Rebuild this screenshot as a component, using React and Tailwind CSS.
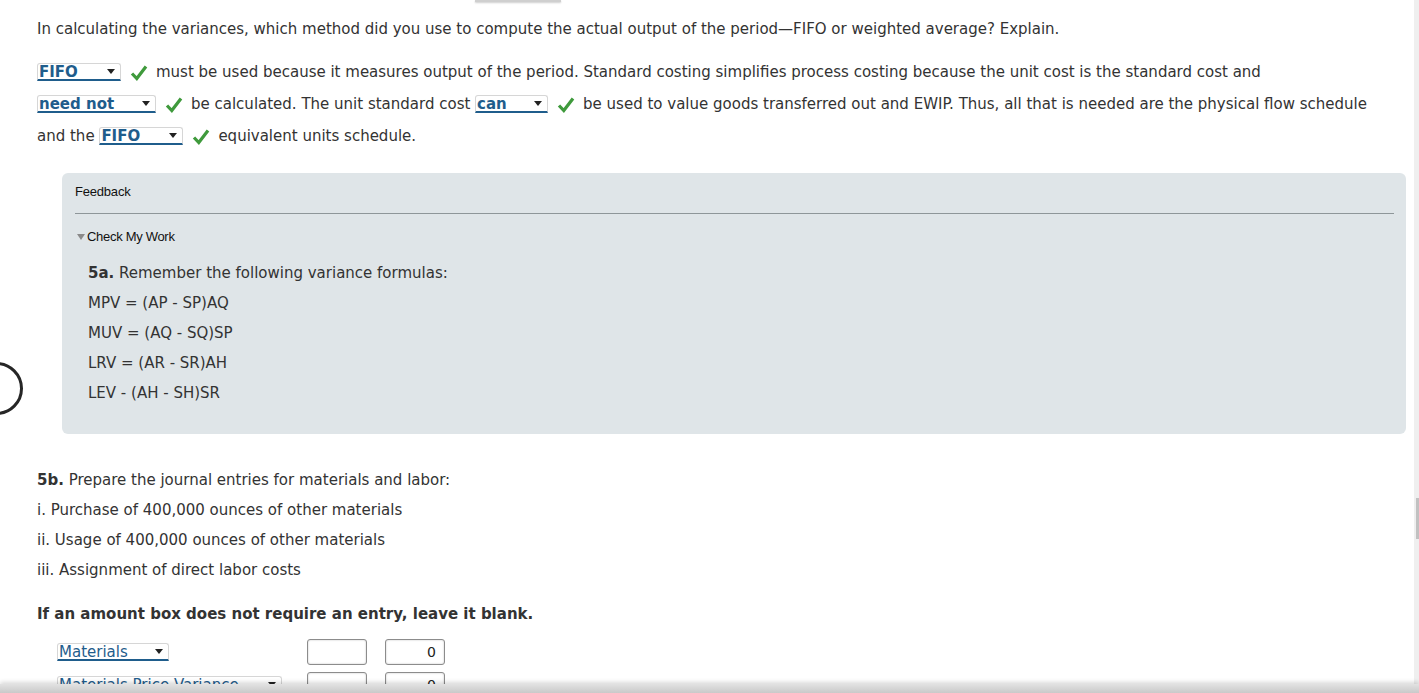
const FONT = "font-['DejaVu_Sans','Verdana',sans-serif]"

function Check() {
  return (
    <svg width="18" height="17" viewBox="0 0 18 17" className="shrink-0">
      <path d="M2 9.5 L6.8 14.5 L16 2.5" fill="none" stroke="#3f9a3c" strokeWidth="3.2" strokeLinecap="butt" strokeLinejoin="miter" />
    </svg>
  )
}

function Caret() {
  return (
    <svg width="8" height="5" viewBox="0 0 8 5" className="shrink-0">
      <path d="M0 0 H8 L4 5 Z" fill="#222" />
    </svg>
  )
}

function Pick({ value, w, bold = true }) {
  return (
    <span
      className={`inline-flex items-center justify-between h-[18px] bg-white rounded-t-[3px] border border-b-2 border-[#d6d6d6] border-b-[#1f5d8c] pl-[1px] pr-[5px] text-[#1f5d8c] leading-[16px] ${bold ? 'font-bold' : ''}`}
      style={{ width: w }}
    >
      <span className="whitespace-nowrap">{value}</span>
      <Caret />
    </span>
  )
}

function Amount({ value }) {
  return (
    <div className="w-[60px] h-[26px] rounded-[3px] border border-[#8c8c8c] bg-white shadow-[inset_0_0_2px_rgba(0,0,0,0.25)] flex items-center justify-end pr-[8px] text-[14px] text-[#222]">
      {value}
    </div>
  )
}

function EntryRow({ account, w, value }) {
  return (
    <div className="flex items-center h-[26px]">
      <div className="w-[250px] pl-[20px] flex items-center">
        <Pick value={account} w={w} bold={false} />
      </div>
      <div className="ml-[20px]"><Amount /></div>
      <div className="ml-[18px]"><Amount value={value} /></div>
    </div>
  )
}

export default function App() {
  return (
    <div className={`relative w-full h-[693px] overflow-hidden bg-white flex ${FONT} text-[15px] text-[#333]`}>
      <div className="flex-1 pl-[37px] pr-[8px] pt-[17px]">
        <p className="leading-[24px] whitespace-nowrap">
          In calculating the variances, which method did you use to compute the actual output of the period—FIFO or weighted average? Explain.
        </p>

        <div className="mt-[15px] leading-[32px]">
          <div className="flex items-center h-[32px] whitespace-nowrap">
            <Pick value="FIFO" w={84} />
            <span className="ml-[9px]"><Check /></span>
            <span className="ml-[8px]">must be used because it measures output of the period. Standard costing simplifies process costing because the unit cost is the standard cost and</span>
          </div>
          <div className="flex items-center h-[32px] whitespace-nowrap">
            <Pick value="need not" w={119} />
            <span className="ml-[9px]"><Check /></span>
            <span className="ml-[8px]">be calculated. The unit standard cost&nbsp;</span>
            <Pick value="can" w={73} />
            <span className="ml-[9px]"><Check /></span>
            <span className="ml-[8px]">be used to value goods transferred out and EWIP. Thus, all that is needed are the physical flow schedule</span>
          </div>
          <div className="flex items-center h-[32px] whitespace-nowrap">
            <span>and the&nbsp;</span>
            <Pick value="FIFO" w={84} />
            <span className="ml-[9px]"><Check /></span>
            <span className="ml-[8px]">equivalent units schedule.</span>
          </div>
        </div>

        <div className="mt-[21px] ml-[25px] bg-[#dfe5e8] rounded-[6px] pt-[9px] pb-[26px] pl-[13px] pr-[12px]">
          <div className="font-['Liberation_Sans',Arial,sans-serif] text-[13px] tracking-[-0.2px] leading-[20px] text-[#111]">Feedback</div>
          <div className="mt-[11px] h-px bg-[#8e9699]" />
          <div className="mt-[13px] flex items-center font-['Liberation_Sans',Arial,sans-serif] text-[13px] tracking-[-0.3px] leading-[20px] text-[#111]">
            <svg width="10" height="8" viewBox="0 0 10 8" className="ml-[1px] mr-[1px]">
              <path d="M1 1 H9 L5 7 Z" fill="#8a8a8a" />
            </svg>
            Check My Work
          </div>
          <div className="mt-[11px] pl-[13px] leading-[30px]">
            <p><span className="font-bold">5a.</span> Remember the following variance formulas:</p>
            <p>MPV = (AP - SP)AQ</p>
            <p>MUV = (AQ - SQ)SP</p>
            <p>LRV = (AR - SR)AH</p>
            <p>LEV - (AH - SH)SR</p>
          </div>
        </div>

        <div className="mt-[31px] leading-[30px]">
          <p><span className="font-bold">5b.</span> Prepare the journal entries for materials and labor:</p>
          <p>i. Purchase of 400,000 ounces of other materials</p>
          <p>ii. Usage of 400,000 ounces of other materials</p>
          <p>iii. Assignment of direct labor costs</p>
        </div>

        <p className="mt-[14px] leading-[30px] font-bold">If an amount box does not require an entry, leave it blank.</p>

        <div className="mt-[10px] flex flex-col gap-[7px]">
          <EntryRow account="Materials" w={112} value="0" />
          <EntryRow account="Materials Price Variance" w={225} value="0" />
        </div>
      </div>

      <div className="w-[5px] bg-[#efefef] flex flex-col">
        <div className="h-[498px]" />
        <div className="ml-[2px] w-[3px] h-[41px] bg-[#c1c1c1]" />
      </div>

      <div className="absolute top-0 left-[475px] w-[86px] h-[2px] bg-[#cfcfcf] shadow-[0_1px_2px_rgba(0,0,0,0.2)]" />
      <div className="absolute left-[-30px] top-[362px] w-[53px] h-[53px] rounded-full border-[3px] border-[#262626]" />
      <div className="absolute bottom-0 left-0 right-0 h-[9px] bg-gradient-to-b from-[#e2e2e2] to-[#c9c9c9] shadow-[0_-2px_4px_rgba(0,0,0,0.15)]" />
    </div>
  )
}
